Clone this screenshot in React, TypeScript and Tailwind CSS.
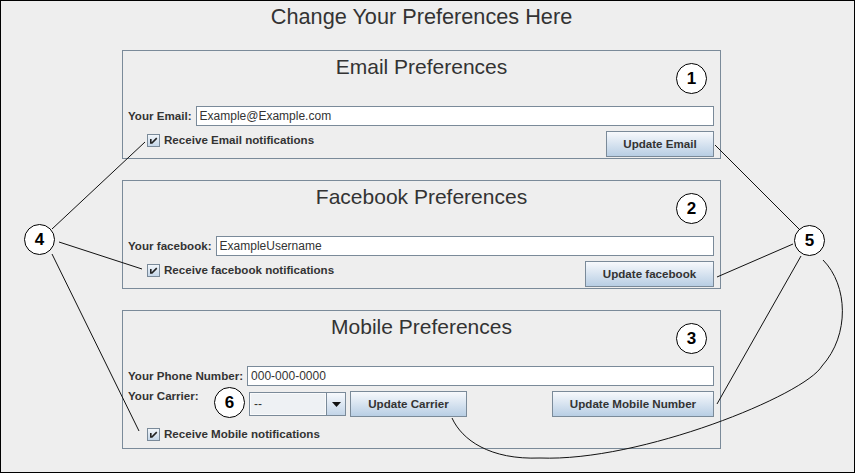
// Preferences form with numbered callouts

import type { ReactNode } from 'react';

function Callout({ n, className }: { n: string; className: string }) {
  return (
    <div
      className={`absolute w-[31px] h-[31px] rounded-full border border-black bg-white flex items-center justify-center text-[17px] leading-none font-bold text-black ${className}`}
    >
      {n}
    </div>
  );
}

function CheckBox({ label }: { label: string }) {
  return (
    <div className="mt-[2px] flex items-center gap-[4px]">
      <div className="w-[13px] h-[13px] border border-[#7a8a99] bg-linear-to-b from-[#f2f6fa] to-[#c4d6e8] flex items-center justify-center">
        <svg width="11" height="11" viewBox="0 0 11 11">
          <path d="M2 4 H3.6 V7.2 L8.2 2.6 L9.3 3.7 L4.3 8.7 H2 Z" fill="#222" />
        </svg>
      </div>
      <span className="text-[11.6px] leading-[14px] font-bold text-[#333]">{label}</span>
    </div>
  );
}

function Btn({ children, w }: { children: ReactNode; w: string }) {
  return (
    <div
      className={`h-[26px] shrink-0 flex items-center justify-center border border-[#7a8a99] bg-linear-to-b from-[#f7f9fc] to-[#b8cee4] text-[11.6px] font-bold text-[#333] ${w}`}
    >
      {children}
    </div>
  );
}

function Field({ value }: { value: string }) {
  return (
    <div className="flex-1 h-[20px] bg-white border border-[#7a8a99] pl-[3px] text-[12px] leading-[18px] text-[#333]">
      {value}
    </div>
  );
}

function Label({ text }: { text: string }) {
  return <div className="shrink-0 text-[11.6px] leading-[14px] font-bold text-[#333]">{text}</div>;
}

function Panel({ title, num, h, children }: { title: string; num: string; h: string; children: ReactNode }) {
  return (
    <div className={`relative ml-[121px] w-[599px] border border-[#7a8a99] ${h}`}>
      <div className="h-[55px] pt-[4px] text-center text-[21px] leading-[24px] text-[#333]">{title}</div>
      {children}
      <Callout n={num} className="left-[553px] top-[12px]" />
    </div>
  );
}

export default function App() {
  return (
    <div className="relative w-[855px] h-[473px] border border-black bg-[#eeeeee] font-['Liberation_Sans',Arial,sans-serif] overflow-hidden">
      {/* Header */}
      <div className="ml-[121px] w-[599px] h-[49px] pt-[4px] text-center text-[21.7px] leading-[24px] text-[#333]">
        Change Your Preferences Here
      </div>

      {/* Email */}
      <Panel title="Email Preferences" num="1" h="h-[109px]">
        <div className="flex items-center gap-[4px] pl-[5px] pr-[6px] h-[20px]">
          <Label text="Your Email:" />
          <Field value="Example@Example.com" />
        </div>
        <div className="mt-[5px] flex items-start justify-between pl-[24px] pr-[6px]">
          <CheckBox label="Receive Email notifications" />
          <Btn w="w-[108px]">Update Email</Btn>
        </div>
      </Panel>

      {/* Facebook */}
      <div className="mt-[21px]">
        <Panel title="Facebook Preferences" num="2" h="h-[109px]">
          <div className="flex items-center gap-[4px] pl-[5px] pr-[6px] h-[20px]">
            <Label text="Your facebook:" />
            <Field value="ExampleUsername" />
          </div>
          <div className="mt-[5px] flex items-start justify-between pl-[24px] pr-[6px]">
            <CheckBox label="Receive facebook notifications" />
            <Btn w="w-[129px]">Update facebook</Btn>
          </div>
        </Panel>
      </div>

      {/* Mobile */}
      <div className="mt-[21px]">
        <Panel title="Mobile Preferences" num="3" h="h-[139px]">
          <div className="flex items-center gap-[4px] pl-[5px] pr-[6px] h-[20px]">
            <Label text="Your Phone Number:" />
            <Field value="000-000-0000" />
          </div>
          <div className="mt-[5px] flex items-start pl-[5px] pr-[6px]">
            <div className="w-[121px] shrink-0 -mt-[2px]">
              <Label text="Your Carrier:" />
            </div>
            <div className="mt-[1px] w-[97px] h-[24px] shrink-0 flex border border-[#7a8a99]">
              <div className="flex-1 bg-[#eef1f4] border border-[#f9fafb] pl-[3px] text-[12px] leading-[20px] text-[#333]">--</div>
              <div className="w-[19px] border-l border-[#7a8a99] bg-linear-to-b from-[#f7f9fc] to-[#c3d5e8] flex items-center justify-center">
                <svg width="9" height="5" viewBox="0 0 9 5">
                  <path d="M0 0 H9 L4.5 5 Z" fill="#111" />
                </svg>
              </div>
            </div>
            <div className="ml-[4px]">
              <Btn w="w-[117px]">Update Carrier</Btn>
            </div>
            <div className="flex-1" />
            <Btn w="w-[162px]">Update Mobile Number</Btn>
          </div>
          <div className="mt-[10px] pl-[24px]">
            <CheckBox label="Receive Mobile notifications" />
          </div>
        </Panel>
      </div>

      {/* Annotation lines */}
      <svg className="absolute left-[-1px] top-[-1px] pointer-events-none" width="855" height="473" viewBox="0 0 855 473">
        <g stroke="#111" strokeWidth="1" fill="none">
          <line x1="52" y1="229" x2="145" y2="142" />
          <line x1="59" y1="242" x2="142" y2="269" />
          <line x1="52" y1="254" x2="139" y2="431" />
          <line x1="799" y1="229" x2="715" y2="145" />
          <line x1="793" y1="244" x2="717" y2="277" />
          <line x1="801" y1="256" x2="717" y2="404" />
          <path d="M823 260 C848 285 850 335 822 366 C805 395 640 462 540 458 C490 460 462 440 452 418" />
        </g>
      </svg>

      <Callout n="4" className="left-[23px] top-[223px]" />
      <Callout n="5" className="left-[793px] top-[224px]" />
      <Callout n="6" className="left-[213px] top-[386px]" />
    </div>
  );
}
